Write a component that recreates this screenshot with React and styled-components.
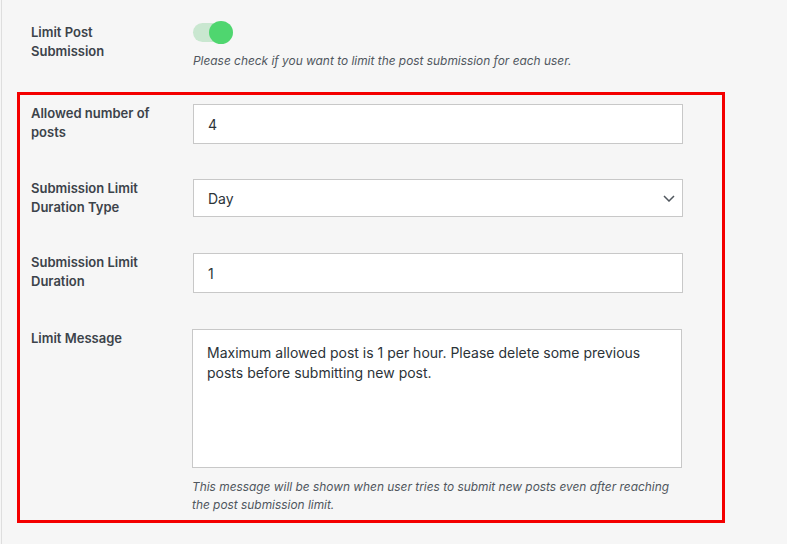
import React from "react";
import styled, { createGlobalStyle } from "styled-components";

const Global = createGlobalStyle`
  html, body { margin: 0; padding: 0; background: #f6f6f6; }
  body { font-family: Inter, "Noto Sans", "Liberation Sans", sans-serif; color: #2c3338; }
  * { box-sizing: border-box; }
`;

const Page = styled.div`
  min-height: 544px;
  margin-left: 1px;
  border-left: 1px solid #dedede;
  padding-top: 22px;
`;

const Row = styled.div`
  display: grid;
  grid-template-columns: 162px 490px;
  align-items: start;
  margin-bottom: ${(p) => p.$gap || 0}px;
`;

const TopRow = styled(Row)`
  padding-left: 29px;
`;

const Label = styled.div`
  font-size: 13px;
  font-weight: 600;
  line-height: 19px;
  color: #3c434a;
  padding-top: ${(p) => p.$top || 0}px;
  padding-right: 10px;
  max-width: ${(p) => p.$max || 162}px;
`;

const Field = styled.div`
  display: flex;
  flex-direction: column;
`;

const Track = styled.div`
  position: relative;
  width: 36px;
  height: 19px;
  margin-top: 1px;
  border-radius: 10px;
  background: #c9e7d0;
`;

const Knob = styled.span`
  position: absolute;
  right: -4px;
  top: -2px;
  width: 24px;
  height: 23px;
  border-radius: 50%;
  background: #4fd66f;
`;

const Desc = styled.p`
  margin: ${(p) => p.$top || 0}px 0 0 ${(p) => p.$left || 0}px;
  font-size: 11.9px;
  font-style: italic;
  line-height: 18px;
  color: #50575e;
`;

const Box = styled.div`
  margin: 22px 0 0 15px;
  width: 708px;
  border: 3px solid #f40000;
  padding: 9px 0 6px 11px;
`;

const TextInput = styled.input`
  width: 490px;
  height: 40px;
  margin: 0;
  padding: 0 14px;
  border: 1px solid #c8c8c8;
  border-radius: 0;
  background: #fff;
  font: inherit;
  font-size: 14px;
  color: #2c3338;
  outline: none;
`;

const SelectWrap = styled.div`
  position: relative;
  width: 490px;
`;

const Select = styled.select`
  appearance: none;
  -webkit-appearance: none;
  width: 490px;
  height: 38px;
  margin: 0;
  padding: 0 14px;
  border: 1px solid #c8c8c8;
  border-radius: 0;
  background: #fff;
  font: inherit;
  font-size: 14px;
  color: #2c3338;
  outline: none;
`;

const Chevron = styled.svg`
  position: absolute;
  right: 8px;
  top: 16px;
  pointer-events: none;
`;

const TextArea = styled.textarea`
  width: 490px;
  height: 139px;
  margin: 0 0 0 -1px;
  padding: 13px 14px;
  border: 1px solid #c8c8c8;
  border-radius: 0;
  background: #fff;
  font: inherit;
  font-size: 14px;
  line-height: 20px;
  color: #2c3338;
  resize: none;
  outline: none;
  display: block;
`;

export default function App() {
  return (
    <>
      <Global />
      <Page>
        <TopRow>
          <Label $top={1} $max={120}>Limit Post Submission</Label>
          <Field>
            <Track>
              <Knob />
            </Track>
            <Desc $top={10}>Please check if you want to limit the post submission for each user.</Desc>
          </Field>
        </TopRow>
        <Box>
          <Row $gap={35}>
            <Label>Allowed number of posts</Label>
            <TextInput defaultValue="4" />
          </Row>
          <Row $gap={36}>
            <Label>Submission Limit Duration Type</Label>
            <SelectWrap>
              <Select defaultValue="day">
                <option value="hour">Hour</option>
                <option value="day">Day</option>
                <option value="week">Week</option>
                <option value="month">Month</option>
              </Select>
              <Chevron width="12" height="7" viewBox="0 0 12 7">
                <path d="M1 1l5 5 5-5" fill="none" stroke="#50575e" strokeWidth="1.5" />
              </Chevron>
            </SelectWrap>
          </Row>
          <Row $gap={36}>
            <Label>Submission Limit Duration</Label>
            <TextInput defaultValue="1" />
          </Row>
          <Row>
            <Label>Limit Message</Label>
            <Field>
              <TextArea defaultValue="Maximum allowed post is 1 per hour. Please delete some previous posts before submitting new post." />
              <Desc $top={10} $left={-1}>
                This message will be shown when user tries to submit new posts even after reaching the post submission limit.
              </Desc>
            </Field>
          </Row>
        </Box>
      </Page>
    </>
  );
}
